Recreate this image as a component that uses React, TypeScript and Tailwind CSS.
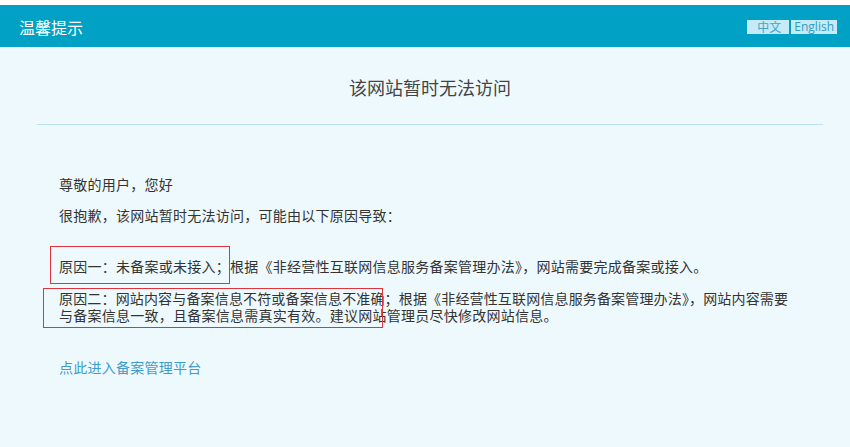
import React from "react";

const cjk = { fontFamily: '"Noto Sans CJK SC", "Noto Sans", sans-serif' };

const App = () => {
  return (
    <div className="min-h-screen border-t-[5px] border-white bg-[#eef9fd] text-[#333]" style={cjk}>
      {/* top bar */}
      <div className="flex h-[42px] items-center justify-between bg-[#01a1c5] pl-[19px] pr-[13px]">
        <div className="pt-[2px] text-[16px] leading-[16px] text-white">温馨提示</div>
        <div className="flex gap-[2px] pt-[2px] text-[12px] leading-[14px]">
          <span className="bg-[#c6eaf6] pl-[10px] pr-[8px] text-[#3ea6cb]">中文</span>
          <span
            className="bg-[#c6eaf6] px-[3px] text-[#2f9dc3]"
            style={{ fontFamily: '"Open Sans", "Liberation Sans", sans-serif' }}
          >
            English
          </span>
        </div>
      </div>

      <div className="ml-[37px] mr-[27px]">
        <div className="flex h-[78px] items-center justify-center border-b border-[#bde3f2]">
          <h1 className="pt-[2px] text-[18px] leading-[18px] text-[#444]">该网站暂时无法访问</h1>
        </div>

        <div className="pl-[22px] text-[14px] leading-[17px] tracking-[0.25px]">
          <p className="mt-[51px]">尊敬的用户，您好</p>
          <p className="mt-[14px]">很抱歉，该网站暂时无法访问，可能由以下原因导致：</p>

          <p className="relative mt-[34px]">
            原因一：未备案或未接入；根据《非经营性互联网信息服务备案管理办法》，网站需要完成备案或接入。
            <span className="pointer-events-none absolute left-[-9px] top-[-12px] h-[38px] w-[180px] border border-[#e0343c]" />
          </p>

          <div className="relative mt-[15px]">
            <span className="block w-[729px] whitespace-nowrap text-justify tracking-normal [text-align-last:justify]">
              原因二：网站内容与备案信息不符或备案信息不准确；根据《非经营性互联网信息服务备案管理办法》，网站内容需要
            </span>
            <span className="block">与备案信息一致，且备案信息需真实有效。建议网站管理员尽快修改网站信息。</span>
            <span className="pointer-events-none absolute left-[-16px] top-[-2px] h-[40px] w-[340px] border border-[#e0343c]" />
          </div>

          <p className="mt-[35px]">
            <a href="#" className="text-[#3d9dcc]">点此进入备案管理平台</a>
          </p>
        </div>
      </div>
    </div>
  );
};

export default App;
